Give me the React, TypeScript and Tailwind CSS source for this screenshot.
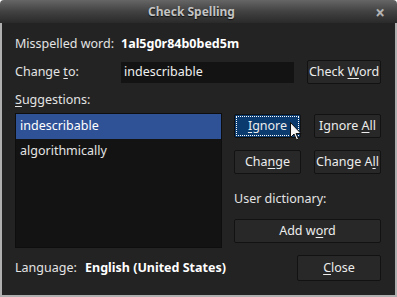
import React from 'react';

const U = ({ children }: { children: React.ReactNode }) => <span className="underline underline-offset-2">{children}</span>;

function Btn({ children, className = '', focused = false }: { children: React.ReactNode; className?: string; focused?: boolean }) {
  return (
    <div
      className={`flex h-[24px] items-center justify-center rounded-[2px] border border-[#121212] text-[#ececec] ${
        focused ? 'bg-[#0b3a6e] p-[1px]' : 'bg-[#282828]'
      } ${className}`}
    >
      {focused ? (
        <div className="flex h-full w-full items-center justify-center border border-dotted border-white">
          <span className="whitespace-pre">{children}</span>
        </div>
      ) : (
        <span className="whitespace-pre">{children}</span>
      )}
    </div>
  );
}

export default function App() {
  return (
    <div className="h-[297px] w-[397px] bg-white font-['Noto_Sans',sans-serif] text-[12.5px] leading-none text-[#e4e4e4]">
      {/* Title bar */}
      <div className="relative flex h-[23px] items-center justify-center rounded-t-[4px] bg-gradient-to-b from-[#666666] via-[#424242] to-[#2a2a2a] pr-[14px]">
        <span className="text-[12px] font-bold text-[#c4c4c4] [text-shadow:0_1px_1px_#111]">Check Spelling</span>
        <span className="absolute right-[12px] top-[4px] text-[17px] font-bold text-[#b4b4b4]">×</span>
      </div>

      {/* Body */}
      <div className="flex h-[274px] flex-col border-x-2 border-b-2 border-[#b0b0b0] bg-[#232323] pl-[13px] pr-[14px] pt-[11px]">
        <div className="flex h-[20px] items-center">
          <span className="w-[106px]">Misspelled word:</span>
          <span className="font-bold text-white">1al5g0r84b0bed5m</span>
        </div>

        <div className="mt-[6px] flex h-[24px] items-center">
          <span className="w-[106px] whitespace-pre">
            Change <U>t</U>o:
          </span>
          <div className="flex h-[21px] w-[173px] items-center bg-[#131313] pl-[3px] text-[#f0f0f0]">indescribable</div>
          <Btn className="ml-auto w-[74px]">
            Check <U>W</U>ord
          </Btn>
        </div>

        <div className="mt-[6px] flex h-[20px] items-center">
          <span>
            <U>S</U>uggestions:
          </span>
        </div>

        <div className="mt-[3px] flex h-[135px] gap-[12px]">
          <div className="w-[207px] border border-[#0e0e0e] bg-[#131313]">
            <div className="flex h-[25px] items-center bg-[#2f5196] pl-[4px] text-white">indescribable</div>
            <div className="flex h-[25px] items-center pl-[4px]">algorithmically</div>
          </div>

          <div className="relative flex w-[147px] flex-col">
            <div className="mt-[1px] flex gap-[13px]">
              <Btn className="w-[67px]" focused>
                <U>I</U>gnore
              </Btn>
              <Btn className="w-[67px]">
                Ignore <U>A</U>ll
              </Btn>
            </div>
            <div className="mt-[12px] flex gap-[13px]">
              <Btn className="w-[67px]">
                Cha<U>n</U>ge
              </Btn>
              <Btn className="w-[67px]">
                Change A<U>l</U>l
              </Btn>
            </div>
            <div className="mt-[15px] flex h-[20px] items-center">User dictionary:</div>
            <Btn className="mt-[10px] w-full">
              Add w<U>o</U>rd
            </Btn>

            {/* mouse pointer */}
            <svg className="absolute left-[56px] top-[9px]" width="12" height="19" viewBox="0 0 12 19">
              <path d="M0.5 0.5 L0.5 15.5 L4 12 L6.5 18 L8.5 17 L6 11.5 L11 11.5 Z" fill="#f4f4f4" stroke="#111" strokeWidth="1" strokeLinejoin="round" />
            </svg>
          </div>
        </div>

        <div className="mt-[7px] flex h-[26px] items-center">
          <span className="w-[70px]">Language:</span>
          <span className="font-bold text-white">English (United States)</span>
          <Btn className="ml-auto h-[26px] w-[84px]">
            <U>C</U>lose
          </Btn>
        </div>
      </div>
    </div>
  );
}
